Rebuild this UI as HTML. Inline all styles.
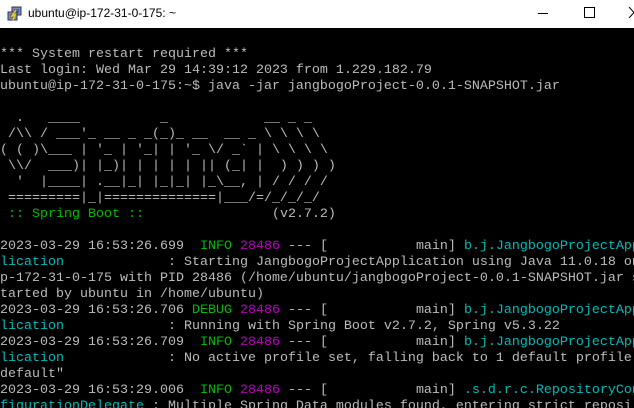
<!DOCTYPE html>
<html><head><meta charset="utf-8"><style>
html,body{margin:0;padding:0;width:634px;height:408px;overflow:hidden;background:#000}
.tb{position:absolute;left:0;top:0;width:634px;height:28px;background:#fff}
.tt{position:absolute;left:28px;top:6px;font:12px "Liberation Sans",sans-serif;color:#000}
.term{position:absolute;left:0;top:31px;width:634px;height:377px;overflow:hidden}
pre{margin:0;font:13.33px/16px "Liberation Mono",monospace;color:#bbb;white-space:pre}
.g{color:#00bb00}.m{color:#bb00bb}.c{color:#00bbbb}
</style></head><body>
<div class="tb">
<svg style="position:absolute;left:7px;top:6px" width="16" height="16" viewBox="0 0 16 16">
<rect x="5" y="1" width="9" height="8" fill="#88a" stroke="#334"/><rect x="7" y="3" width="5" height="4" fill="#36c"/>
<rect x="1" y="6" width="9" height="8" fill="#88a" stroke="#334"/><rect x="3" y="8" width="5" height="4" fill="#36c"/>
<path d="M9 4 L5 10 L8 9 L6 14" stroke="#fc0" stroke-width="1.5" fill="none"/></svg>
<div class="tt">ubuntu@ip-172-31-0-175: ~</div>
<div style="position:absolute;left:538px;top:13px;width:10px;height:1px;background:#000"></div>
<div style="position:absolute;left:584px;top:7px;width:9px;height:9px;border:1px solid #000"></div>
<svg style="position:absolute;left:628px;top:7px" width="6" height="11"><path d="M1 0 L6 5.5 M1 11 L6 5.5" stroke="#000" fill="none"/></svg>
</div>
<div class="term"><pre>&#32;
*** System restart required ***
Last login: Wed Mar 29 14:39:12 2023 from 1.229.182.79
ubuntu@ip-172-31-0-175:~$ java -jar jangbogoProject-0.0.1-SNAPSHOT.jar

  .   ____          _            __ _ _
 /\\ / ___'_ __ _ _(_)_ __  __ _ \ \ \ \
( ( )\___ | '_ | '_| | '_ \/ _` | \ \ \ \
 \\/  ___)| |_)| | | | | || (_| |  ) ) ) )
  '  |____| .__|_| |_|_| |_\__, | / / / /
 =========|_|==============|___/=/_/_/_/
<span class="g"> :: Spring Boot :: </span>               (v2.7.2)

2023-03-29 16:53:26.699  <span class="g">INFO</span> <span class="m">28486</span> --- [           main] <span class="c">b.j.JangbogoProjectApp</span>
<span class="c">lication</span>             : Starting JangbogoProjectApplication using Java 11.0.18 on i
p-172-31-0-175 with PID 28486 (/home/ubuntu/jangbogoProject-0.0.1-SNAPSHOT.jar s
tarted by ubuntu in /home/ubuntu)
2023-03-29 16:53:26.706 <span class="g">DEBUG</span> <span class="m">28486</span> --- [           main] <span class="c">b.j.JangbogoProjectApp</span>
<span class="c">lication</span>             : Running with Spring Boot v2.7.2, Spring v5.3.22
2023-03-29 16:53:26.709  <span class="g">INFO</span> <span class="m">28486</span> --- [           main] <span class="c">b.j.JangbogoProjectApp</span>
<span class="c">lication</span>             : No active profile set, falling back to 1 default profile: "
default"
2023-03-29 16:53:29.006  <span class="g">INFO</span> <span class="m">28486</span> --- [           main] <span class="c">.s.d.r.c.RepositoryCon</span>
<span class="c">figurationDelegate</span> : Multiple Spring Data modules found, entering strict reposi
</pre></div>
</body></html>
